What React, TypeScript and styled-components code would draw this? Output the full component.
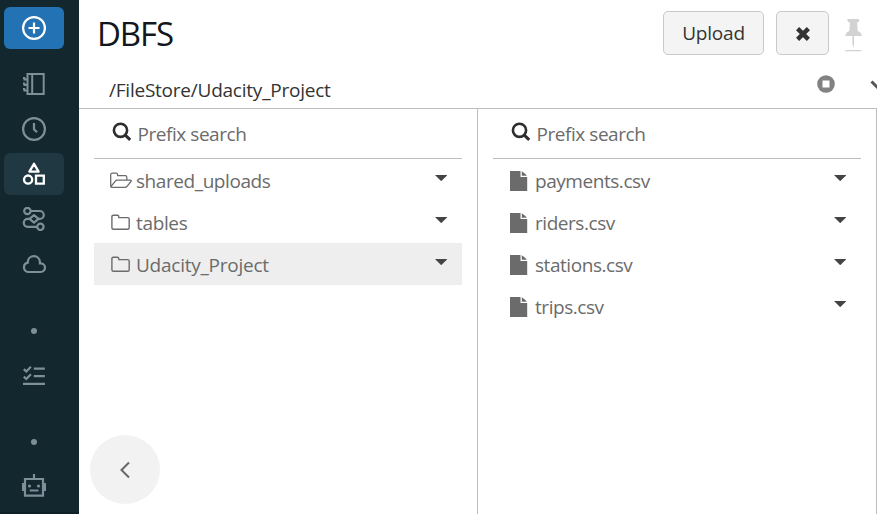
import React from "react";
import styled, { createGlobalStyle } from "styled-components";

const Global = createGlobalStyle`
  * { box-sizing: border-box; }
  body { margin: 0; background: #fff; overflow: hidden; font-family: "Open Sans", "Noto Sans", sans-serif; }
  svg { display: block; flex: none; }
`;

const Shell = styled.div`
  display: flex;
  width: 877px;
  height: 514px;
  overflow: hidden;
`;

const Sidebar = styled.nav`
  width: 79px;
  flex: none;
  display: flex;
  flex-direction: column;
  gap: 3px;
  padding: 7px 15px 0 4px;
  background: #13272e;
  border-bottom: 2px solid #0e2027;
`;

const NavItem = styled.div<{ $bg?: string; $color?: string; $after?: number }>`
  height: 42px;
  flex: none;
  display: flex;
  align-items: center;
  justify-content: center;
  border-radius: 6px;
  background: ${(p) => p.$bg ?? "transparent"};
  color: ${(p) => p.$color ?? "#7d909a"};
  margin-bottom: ${(p) => p.$after ?? 0}px;
`;

const Dot = styled.span`
  width: 6px;
  height: 6px;
  border-radius: 50%;
  background: currentColor;
`;

const Main = styled.main`
  flex: 1;
  min-width: 0;
  display: flex;
  flex-direction: column;
`;

const Header = styled.header`
  height: 67px;
  flex: none;
  display: flex;
  align-items: flex-start;
  padding: 11px 15px 0 18px;
`;

const Title = styled.h1`
  margin: 0;
  flex: 1;
  font-size: 33px;
  line-height: 46px;
  font-weight: 380;
  letter-spacing: -1.1px;
  color: #11171c;
`;

const Button = styled.button<{ $width: number }>`
  width: ${(p) => p.$width}px;
  height: 44px;
  padding: 1px 0 0;
  display: flex;
  align-items: center;
  justify-content: center;
  border: 1px solid #c9c9c9;
  border-radius: 5px;
  background: #f4f4f4;
  color: #333;
  font: 400 19px/41px "Open Sans", "Noto Sans", sans-serif;
  letter-spacing: -0.2px;
  & + & { margin-left: 12px; }
`;

const PinSlot = styled.div`
  margin: 7px 0 0 16px;
`;

const PathBar = styled.div`
  height: 42px;
  flex: none;
  display: flex;
  align-items: flex-start;
  padding-left: 30px;
  border-bottom: 1px solid #bdbdbd;
  overflow: hidden;
`;

const Path = styled.span`
  flex: 1;
  font-size: 19px;
  line-height: 46px;
  letter-spacing: -0.23px;
  color: #333;
`;

const Badge = styled.div`
  margin: 8px 35px 0 0;
`;

const Chevron = styled.div`
  width: 7px;
  overflow: hidden;
  margin-top: 13px;
`;

const Columns = styled.div`
  flex: 1;
  display: flex;
`;

const Column = styled.section`
  width: 399px;
  flex: none;
  padding: 0 15px;
  border-right: 1px solid #bdbdbd;
`;

const Search = styled.div`
  height: 50px;
  display: flex;
  align-items: center;
  gap: 5.5px;
  padding-left: 18px;
  border-bottom: 1px solid #bdbdbd;
  color: #2e2e2e;
  svg { margin-bottom: 4px; }
`;

const Label = styled.span<{ $spacing?: number }>`
  font-size: 19px;
  line-height: 26px;
  letter-spacing: ${(p) => p.$spacing ?? -0.45}px;
  color: #6b6b6b;
  white-space: nowrap;
`;

const Row = styled.div<{ $selected?: boolean }>`
  height: 42px;
  display: flex;
  align-items: center;
  padding: 2px 15px 0 16px;
  background: ${(p) => (p.$selected ? "#eeeeee" : "transparent")};
  color: #6b6b6b;
`;

const RowIcon = styled.span`
  width: 26px;
  flex: none;
`;

const Caret = styled.svg`
  margin: -6px 0 0 auto;
  fill: #444;
`;

const BackButton = styled.div`
  position: absolute;
  left: 90px;
  top: 435px;
  width: 70px;
  height: 69px;
  border-radius: 50%;
  background: #f2f2f2;
  display: flex;
  align-items: center;
  justify-content: center;
`;

const Icon = ({ children, w = 24, h = 24, sw = 2 }: { children: React.ReactNode; w?: number; h?: number; sw?: number }) => (
  <svg width={w} height={h} viewBox={`0 0 ${w} ${h}`} fill="none" stroke="currentColor" strokeWidth={sw}>
    {children}
  </svg>
);

const PlusIcon = () => (
  <Icon sw={2.2}>
    <circle cx="12" cy="12" r="10.9" />
    <path d="M12 6.500v11M6.500 12h11" />
  </Icon>
);
const NotebookIcon = () => (
  <Icon>
    <path d="M5.500 2h16.200v20H5.500zM10.200 2v20M5.500 7.500H2.500V5.500M5.500 13H2.500v-2M5.500 18.500H2.500v-2" />
    <path d="M1 6h2M1 11.500h2M1 17h2" />
  </Icon>
);
const ClockIcon = () => (
  <Icon sw={2.2}>
    <circle cx="12" cy="12" r="10.900" />
    <path d="M12 6v6.200l3 3" />
  </Icon>
);
const ShapesIcon = () => (
  <Icon sw={2.3}>
    <path d="M12 1.800 16.600 9.700H7.400z" strokeLinejoin="round" />
    <circle cx="6.100" cy="17.600" r="4.100" />
    <path d="M14 13.600h7.800v8H14z" />
  </Icon>
);
const PipelineIcon = () => (
  <Icon sw={2.200}>
    <circle cx="5.400" cy="4" r="3.200" />
    <circle cx="18.400" cy="19.800" r="3.200" />
    <path d="M8.600 4h9.200a3.900 3.900 0 0 1 0 7.900H16M15.200 19.800H5.700a3.900 3.900 0 0 1 0-7.900H8" />
    <path d="M7.500 11.900 12 8.200l4.500 3.700-4.500 3.700z" strokeLinejoin="round" />
  </Icon>
);
const CloudIcon = () => (
  <Icon sw={2.200}>
    <path d="M5.800 20h12.800a4.300 4.300 0 0 0 .2-8.600h-.9V9.700a6.100 6.100 0 0 0-12.100-.4v1.300a4.800 4.800 0 0 0 0 9.400z" />
  </Icon>
);
const ChecklistIcon = () => (
  <Icon sw={2.200}>
    <path d="M11.800 4.700h11M11.800 12.200h11M1 19.900h22" />
    <path d="m1.800 5.100 2.500 2.400 4.600-4.800M1.800 12.600l2.500 2.400 4.600-4.800" />
  </Icon>
);
const RobotIcon = () => (
  <Icon sw={2.200}>
    <path d="M3 5h18v16.600H3zM12 0v5M1 9v8M23 9v8M7.700 16.500h8.800" />
    <circle cx="7.500" cy="12" r="1.600" fill="currentColor" stroke="none" />
    <circle cx="16.500" cy="12" r="1.600" fill="currentColor" stroke="none" />
  </Icon>
);
const CloseIcon = () => (
  <Icon w={16} h={16} sw={4.400}>
    <path d="m2.600 2.600 10.800 10.800M13.400 2.600 2.600 13.400" />
  </Icon>
);
const PinIcon = () => (
  <svg width="17" height="34" viewBox="0 0 17 34" fill="#d2d2d2">
    <path d="M2.500 1h11.500v2c0 1-2 1.500-2 1.500l.8 8.500c2 .8 4 2.500 4 5H.3c0-2.500 2-4.200 4-5L5 4.500S2.500 4 2.500 3zM7.400 18h1.600v8l-.8 4-.8-4zM.3 31.900h16v1.400H.3z" />
  </svg>
);
const StopIcon = () => (
  <svg width="18" height="18" viewBox="0 0 18 18">
    <circle cx="9" cy="9" r="8.800" fill="#828282" />
    <path d="M5.500 5.500h7v7h-7z" fill="#fff" />
  </svg>
);
const SearchIcon = () => (
  <svg width="20" height="20" viewBox="0 0 20 20" fill="none" stroke="currentColor">
    <circle cx="8.500" cy="8.300" r="6.600" strokeWidth="2.600" />
    <path d="m13 12.800 5.200 5" strokeWidth="3" />
  </svg>
);
const FolderIcon = () => (
  <svg width="22" height="18" viewBox="0 0 22 18" fill="none" stroke="currentColor" strokeWidth="1.400">
    <path d="M1.900 13.800V2.700c0-.9.600-1.500 1.500-1.500h3.900c.9 0 1.500.6 1.500 1.500v.9h8.900c.9 0 1.500.6 1.500 1.500v8.700c0 .9-.6 1.500-1.500 1.500H3.400c-.9 0-1.500-.6-1.500-1.500z" />
  </svg>
);
const FolderOpenIcon = () => (
  <svg width="22" height="18" viewBox="0 0 22 18" fill="none" stroke="currentColor" strokeWidth="1.300" strokeLinejoin="round">
    <path d="M.7 13.800V2.700c0-.9.600-1.500 1.500-1.500h3.900c.9 0 1.500.6 1.500 1.500v1h7.700c.9 0 1.500.6 1.500 1.500v2.900M.9 14.700l4.400-5.500c.5-.7 1.100-1 1.900-1h13c1.100 0 1.400.6.800 1.300l-4 4.800c-.5.700-1.200 1-2 1H2.200c-.9 0-1.500-.5-1.500-1.500" />
  </svg>
);
const FileIcon = () => (
  <svg width="20" height="20" viewBox="0 0 20 20" fill="currentColor">
    <path d="M1 0h10.500v6h6.700v14H1zM12.800.3c.5.200 4.800 3.900 5.200 4.500h-5.200z" />
  </svg>
);
const RowCaret = () => (
  <Caret width="12" height="6" viewBox="0 0 12 6">
    <path d="M0 0h12.400L6.200 6.200z" />
  </Caret>
);

const folders = [
  { name: "shared_uploads", open: true, spacing: -0.43 },
  { name: "tables", spacing: -0.35 },
  { name: "Udacity_Project", selected: true, spacing: -0.25 },
];
const files = ["payments.csv", "riders.csv", "stations.csv", "trips.csv"];

const SearchField = () => (
  <Search>
    <SearchIcon />
    <Label $spacing={-0.45}>Prefix search</Label>
  </Search>
);

export default function App() {
  return (
    <>
      <Global />
      <Shell>
        <Sidebar>
          <NavItem $bg="#2272b4" $color="#fff" $after={11}><PlusIcon /></NavItem>
          <NavItem><NotebookIcon /></NavItem>
          <NavItem><ClockIcon /></NavItem>
          <NavItem $bg="#203841" $color="#fff"><ShapesIcon /></NavItem>
          <NavItem><PipelineIcon /></NavItem>
          <NavItem $after={22}><CloudIcon /></NavItem>
          <NavItem><Dot /></NavItem>
          <NavItem $after={21}><ChecklistIcon /></NavItem>
          <NavItem $after={-1}><Dot /></NavItem>
          <NavItem><RobotIcon /></NavItem>
        </Sidebar>
        <Main>
          <Header>
            <Title>DBFS</Title>
            <Button $width={101}>Upload</Button>
            <Button $width={53} aria-label="Close"><CloseIcon /></Button>
            <PinSlot><PinIcon /></PinSlot>
          </Header>
          <PathBar>
            <Path>/FileStore/Udacity_Project</Path>
            <Badge><StopIcon /></Badge>
            <Chevron>
              <svg width="14" height="10" viewBox="0 0 14 10" fill="none" stroke="#555" strokeWidth="3">
                <path d="m1.500 1.500 5.500 5.500 5.500-5.500" />
              </svg>
            </Chevron>
          </PathBar>
          <Columns>
            <Column>
              <SearchField />
              {folders.map((f) => (
                <Row key={f.name} $selected={f.selected}>
                  <RowIcon>{f.open ? <FolderOpenIcon /> : <FolderIcon />}</RowIcon>
                  <Label $spacing={f.spacing}>{f.name}</Label>
                  <RowCaret />
                </Row>
              ))}
            </Column>
            <Column>
              <SearchField />
              {files.map((name) => (
                <Row key={name}>
                  <RowIcon><FileIcon /></RowIcon>
                  <Label>{name}</Label>
                  <RowCaret />
                </Row>
              ))}
            </Column>
          </Columns>
        </Main>
      </Shell>
      <BackButton>
        <svg width="12" height="18" viewBox="0 0 12 18" fill="none" stroke="#666" strokeWidth="2">
          <path d="M10 1.500 2.500 9l7.500 7.500" />
        </svg>
      </BackButton>
    </>
  );
}
